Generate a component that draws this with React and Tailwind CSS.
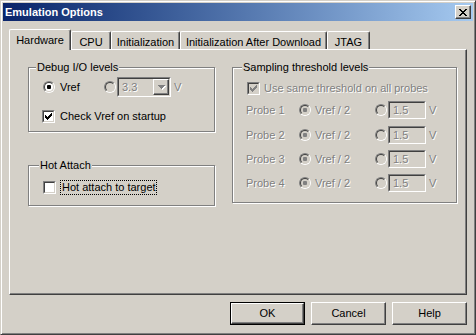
import React from "react";

const FONT = { fontFamily: '"Liberation Sans", Arial, sans-serif' };
const DIS = "text-[#808080] [text-shadow:1px_1px_0_#ffffff]";

function Radio({ checked, disabled }) {
  return (
    <div className="w-[12px] h-[12px] rounded-full border border-t-[#808080] border-l-[#808080] border-r-white border-b-white shrink-0">
      <div
        className={
          "w-full h-full rounded-full border border-t-[#404040] border-l-[#404040] border-r-[#d4d0c8] border-b-[#d4d0c8] flex items-center justify-center " +
          (disabled ? "bg-[#d4d0c8]" : "bg-white")
        }
      >
        {checked && (
          <div className={"w-[4px] h-[4px] rounded-[1px] " + (disabled ? "bg-[#808080]" : "bg-black")} />
        )}
      </div>
    </div>
  );
}

function Check({ checked, disabled }) {
  const cols = [2, 3, 4, 3, 2, 1, 0];
  return (
    <div className="w-[13px] h-[13px] border border-t-[#808080] border-l-[#808080] border-r-white border-b-white shrink-0">
      <div
        className={
          "w-full h-full border border-t-[#404040] border-l-[#404040] border-r-[#d4d0c8] border-b-[#d4d0c8] flex items-center justify-center " +
          (disabled ? "bg-[#d4d0c8]" : "bg-white")
        }
      >
        {checked && (
          <svg width="7" height="7" viewBox="0 0 7 7" shapeRendering="crispEdges">
            {cols.map((r, i) => (
              <rect key={i} x={i} y={r} width="1" height="3" fill={disabled ? "#808080" : "#000"} />
            ))}
          </svg>
        )}
      </div>
    </div>
  );
}

function Sunken({ className = "", children }) {
  return (
    <div className={"border border-t-[#808080] border-l-[#808080] border-r-white border-b-white " + className}>
      <div className="w-full h-full border border-t-[#404040] border-l-[#404040] border-r-[#d4d0c8] border-b-[#d4d0c8] bg-[#d4d0c8] flex items-center">
        {children}
      </div>
    </div>
  );
}

function Group({ label, labelLeft, className = "", children }) {
  return (
    <div
      className={
        "relative border border-[#808080] shadow-[inset_1px_1px_0_#ffffff,1px_1px_0_#ffffff] " + className
      }
    >
      <span
        className="absolute top-[-8px] bg-[#d4d0c8] px-[1px] leading-[14px] text-black"
        style={{ left: labelLeft }}
      >
        {label}
      </span>
      {children}
    </div>
  );
}

function Raised({ className = "", children }) {
  return (
    <div
      className={
        "border border-t-white border-l-white border-r-[#404040] border-b-[#404040] shadow-[inset_-1px_-1px_0_#808080] bg-[#d4d0c8] flex items-center justify-center " +
        className
      }
    >
      {children}
    </div>
  );
}

function Tab({ label, width, selected }) {
  return (
    <div
      className={
        "border-l border-t border-l-white border-t-white border-r border-r-[#404040] shadow-[inset_-1px_0_0_#808080] rounded-tl-[2px] rounded-tr-[2px] bg-[#d4d0c8] flex justify-center text-black " +
        (selected ? "h-[21px] -mb-[1px] relative z-10 pt-[4px]" : "h-[18px] pt-[4px]")
      }
      style={{ width }}
    >
      <span className="leading-[13px]">{label}</span>
    </div>
  );
}

function ProbeRow({ n, mt }) {
  return (
    <div className={"flex items-center h-[18px] ml-[13px] " + mt}>
      <span className={"w-[53px] " + DIS}>Probe {n}</span>
      <div className="w-[76px] flex items-center">
        <Radio checked disabled />
        <span className={"ml-[4px] " + DIS}>Vref / 2</span>
      </div>
      <Radio disabled />
      <Sunken className="ml-[1px] w-[38px] h-[18px]">
        <span className={"ml-[3px] " + DIS}>1.5</span>
      </Sunken>
      <span className={"ml-[3px] " + DIS}>V</span>
    </div>
  );
}

export default function App() {
  const xRows = [
    "XX....XX",
    ".XX..XX.",
    "..XXXX..",
    "...XX...",
    "..XXXX..",
    ".XX..XX.",
    "XX....XX",
  ];
  return (
    <div
      className="w-[476px] h-[335px] bg-[#d4d0c8] border border-t-[#d4d0c8] border-l-[#d4d0c8] border-r-[#404040] border-b-[#404040] shadow-[inset_1px_1px_0_#ffffff,inset_-1px_-1px_0_#808080] p-[2px] flex flex-col text-[11px] leading-[13px] text-black"
      style={FONT}
    >
      {/* Title bar */}
      <div className="h-[18px] bg-linear-to-r from-[#0a246a] to-[#a6caf0] flex items-center justify-between pl-[2px] pr-[2px]">
        <span className="text-white font-bold text-[11px]">Emulation Options</span>
        <Raised className="w-[16px] h-[14px]">
          <svg width="8" height="7" viewBox="0 0 8 7" shapeRendering="crispEdges">
            {xRows.map((row, y) =>
              row.split("").map((c, x) =>
                c === "X" ? <rect key={x + "-" + y} x={x} y={y} width="1" height="1" fill="#000" /> : null
              )
            )}
          </svg>
        </Raised>
      </div>

      {/* Content */}
      <div className="flex-1 flex flex-col px-[6px] pt-[8px]">
        <div className="h-[20px] flex items-end relative z-10">
          <Tab label="Hardware" width={62} selected />
          <Tab label="CPU" width={40} />
          <Tab label="Initialization" width={69} />
          <Tab label="Initialization After Download" width={147} />
          <Tab label="JTAG" width={43} />
        </div>

        <div className="h-[246px] border border-t-white border-l-white border-r-[#404040] border-b-[#404040] shadow-[inset_-1px_-1px_0_#808080] flex pl-[18px] pt-[17px] gap-[17px]">
          {/* Left column */}
          <div className="w-[187px] flex flex-col">
            <Group label="Debug I/O levels" labelLeft={7} className="h-[65px] flex flex-col pl-[14px]">
              <div className="flex items-center h-[20px] mt-[9px]">
                <div className="w-[61px] flex items-center">
                  <Radio checked />
                  <span className="ml-[5px]">Vref</span>
                </div>
                <Radio disabled />
                <Sunken className="ml-[1px] w-[54px] h-[20px]">
                  <span className={"ml-[3px] flex-1 " + DIS}>3.3</span>
                  <Raised className="w-[16px] h-[16px]">
                    <svg width="7" height="4" viewBox="0 0 7 4" shapeRendering="crispEdges" className="overflow-visible">
                      <path d="M1 1h7v1h-1v1h-1v1h-1v1h-1v-1h-1v-1h-1v-1h-1z" fill="#ffffff" />
                      <path d="M0 0h7v1h-1v1h-1v1h-1v1h-1v-1h-1v-1h-1v-1h-1z" fill="#808080" />
                    </svg>
                  </Raised>
                </Sunken>
                <span className={"ml-[3px] " + DIS}>V</span>
              </div>
              <div className="flex items-center mt-[13px] -ml-[1px]">
                <Check checked />
                <span className="ml-[5px]">Check Vref on startup</span>
              </div>
            </Group>

            <Group label="Hot Attach" labelLeft={10} className="h-[41px] mt-[33px] pl-[14px] pt-[14px]">
              <div className="flex items-center">
                <Check />
                <span className="ml-[4px] w-[97px] h-[15px] overflow-hidden whitespace-nowrap border border-dotted border-black pl-[1px] leading-[13px]">
                  Hot attach to target
                </span>
              </div>
            </Group>
          </div>

          {/* Right column */}
          <Group label="Sampling threshold levels" labelLeft={9} className="w-[225px] h-[136px] flex flex-col">
            <div className="flex items-center mt-[14px] ml-[14px]">
              <Check checked disabled />
              <span className={"ml-[4px] " + DIS}>Use same threshold on all probes</span>
            </div>
            <ProbeRow n={1} mt="mt-[6px]" />
            <ProbeRow n={2} mt="mt-[7px]" />
            <ProbeRow n={3} mt="mt-[6px]" />
            <ProbeRow n={4} mt="mt-[6px]" />
          </Group>
        </div>

        <div className="flex justify-end gap-[6px] mt-[7px]">
          <div className="w-[75px] h-[23px] border border-black">
            <Raised className="w-full h-full">OK</Raised>
          </div>
          <Raised className="w-[75px] h-[23px]">Cancel</Raised>
          <Raised className="w-[75px] h-[23px]">Help</Raised>
        </div>
      </div>
    </div>
  );
}
